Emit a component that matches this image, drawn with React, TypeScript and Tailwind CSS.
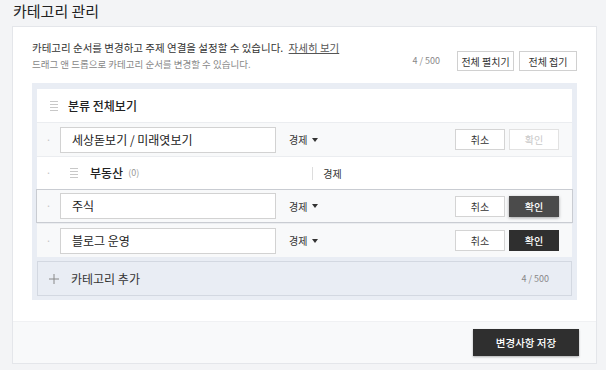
const font = { fontFamily: '"Noto Sans CJK KR", "Noto Sans", sans-serif' };

function Handle({ className = "" }: { className?: string }) {
  return (
    <span className={`flex flex-col gap-[2px] w-[8px] ${className}`}>
      <span className="h-px bg-[#c8c8c8]" />
      <span className="h-px bg-[#c8c8c8]" />
      <span className="h-px bg-[#c8c8c8]" />
      <span className="h-px bg-[#c8c8c8]" />
    </span>
  );
}

function Dot() {
  return <span className="w-[23px] text-center text-[10px] text-[#c4c4c4] leading-none">·</span>;
}

function Caret() {
  return (
    <svg width="6" height="4" viewBox="0 0 6 4" className="ml-[5px]">
      <path d="M0 0h6L3 4z" fill="#333" />
    </svg>
  );
}

function EditRow({
  name,
  confirm,
  selected,
}: {
  name: string;
  confirm: "disabled" | "hover" | "active";
  selected?: boolean;
}) {
  const confirmCls =
    confirm === "disabled"
      ? "bg-white border-[#e2e2e2] text-[#c8c8c8]"
      : confirm === "hover"
      ? "bg-[#4b4b4b] border-[#4b4b4b] text-white font-medium shadow-[0_1px_3px_rgba(0,0,0,0.35)]"
      : "bg-[#2f2f2f] border-[#2f2f2f] text-white font-medium";
  return (
    <div
      className={`flex items-center h-[34px] bg-[#f8f9fa] border-t ${
        selected ? "border border-[#c9ccd2] -mx-px" : "border-[#ebedf0]"
      }`}
    >
      <Dot />
      <div className="w-[216px] h-[26px] border border-[#d2d2d2] bg-white flex items-center pl-[11px] text-[12px] text-[#222]">
        {name}
      </div>
      <div className="ml-[13px] flex items-center text-[10px] text-[#333]">
        경제
        <Caret />
      </div>
      <div className="ml-auto mr-[13px] flex gap-[4px]">
        <button className="w-[50px] h-[21px] border border-[#d4d4d4] bg-white text-[10px] text-[#333]">
          취소
        </button>
        <button className={`w-[50px] h-[21px] border text-[10px] ${confirmCls}`}>확인</button>
      </div>
    </div>
  );
}

export default function App() {
  return (
    <div style={font} className="w-[606px] h-[370px] bg-[#f3f4f6] px-[12px] pt-[1px] overflow-hidden">
      <h1 className="text-[15px] leading-[20px] text-[#222] pl-[1px]">카테고리 관리</h1>
      <div className="mt-[5px] w-[585px] bg-white border border-[#e4e6ea]">
        <div className="px-[19px] pt-[13px]">
          <div className="flex items-end">
            <div>
              <p className="text-[10.5px] leading-[15px] text-[#333]">
                카테고리 순서를 변경하고 주제 연결을 설정할 수 있습니다.{" "}
                <span className="underline text-[#555] ml-[3px]">자세히 보기</span>
              </p>
              <p className="text-[9.5px] leading-[15px] text-[#888] mt-[2px]">
                드래그 앤 드롭으로 카테고리 순서를 변경할 수 있습니다.
              </p>
            </div>
            <div className="ml-auto flex items-center mb-[1px]">
              <span className="text-[9px] text-[#888] mr-[17px]">4 / 500</span>
              <button className="w-[57px] h-[20px] border border-[#d0d0d0] text-[10px] text-[#333] bg-white">
                전체 펼치기
              </button>
              <button className="ml-[5px] w-[58px] h-[20px] border border-[#d0d0d0] text-[10px] text-[#333] bg-white">
                전체 접기
              </button>
            </div>
          </div>

          <div className="mt-[11px] bg-[#e9edf4] px-[5px] pt-[6px] pb-[4px]">
            <div className="bg-white">
              <div className="flex items-center h-[33px] pl-[13px]">
                <Handle />
                <span className="ml-[10px] text-[12px] font-medium text-[#222]">분류 전체보기</span>
              </div>
              <EditRow name="세상돋보기 / 미래엿보기" confirm="disabled" />
              <div className="flex items-center h-[33px] border-t border-[#ebedf0]">
                <Dot />
                <Handle className="ml-[10px]" />
                <span className="ml-[12px] text-[12px] font-medium text-[#222]">부동산</span>
                <span className="ml-[5px] text-[9px] text-[#999]">(0)</span>
                <span className="ml-[173px] w-px h-[13px] bg-[#ddd]" />
                <span className="ml-[10px] text-[10px] text-[#333]">경제</span>
              </div>
              <EditRow name="주식" confirm="hover" selected />
              <EditRow name="블로그 운영" confirm="active" />
            </div>
            <div className="mt-[4px] h-[35px] border border-[#d3d8e1] bg-[#e9edf4] flex items-center pl-[11px] pr-[22px]">
              <svg width="10" height="10" viewBox="0 0 10 10">
                <path d="M5 0v10M0 5h10" stroke="#888" strokeWidth="1" />
              </svg>
              <span className="ml-[12px] text-[12px] text-[#333]">카테고리 추가</span>
              <span className="ml-auto text-[9px] text-[#888]">4 / 500</span>
            </div>
          </div>
        </div>

        <div className="mt-[21px] bg-[#f8f9fa] border-t border-[#f0f1f3] h-[42px] flex items-center justify-end pr-[17px]">
          <button className="w-[106px] h-[27px] bg-[#2f2f2f] text-white text-[10.5px] font-medium shadow-[0_1px_2px_rgba(0,0,0,0.3)]">
            변경사항 저장
          </button>
        </div>
      </div>
    </div>
  );
}
